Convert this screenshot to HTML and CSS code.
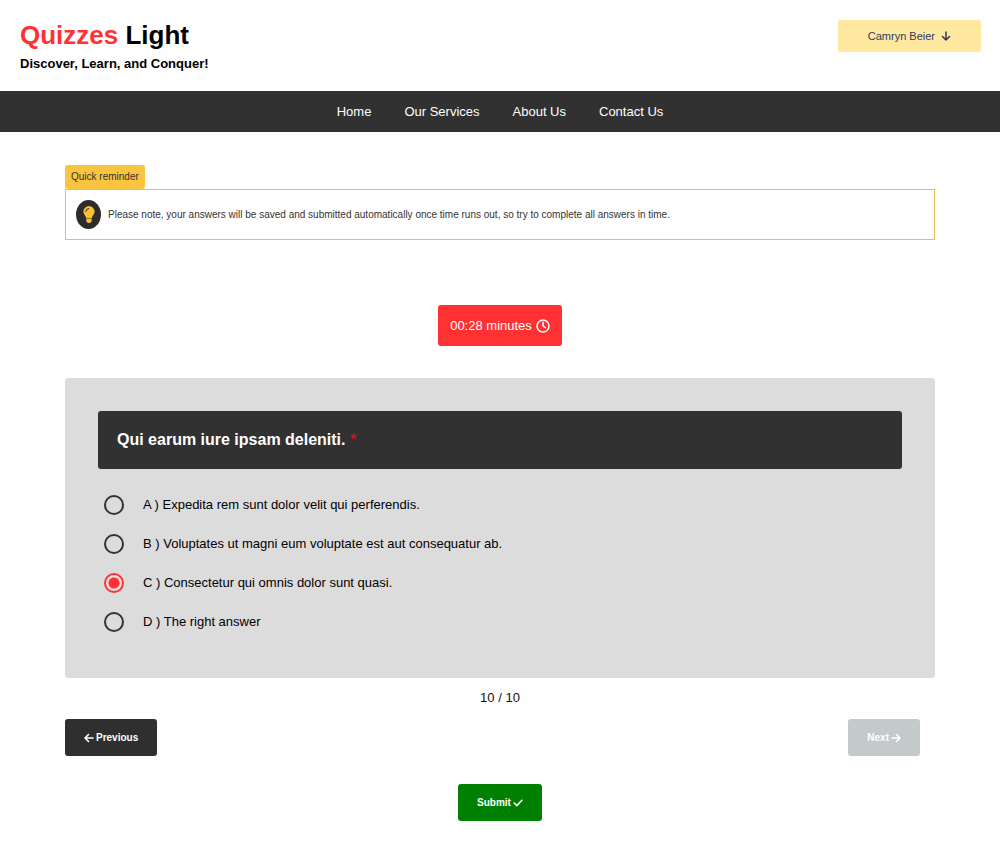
FILE: index.html
```html
<!DOCTYPE html>
<html lang="en">
<head>
<meta charset="utf-8">
<meta name="viewport" content="width=device-width, initial-scale=1">
<title>Quizzes Light</title>
<link rel="stylesheet" href="styles.css">
</head>
<body>
<header class="header">
  <div class="brand">
    <h1 class="brand-name"><span class="accent">Quizzes</span> Light</h1>
    <p class="tagline">Discover, Learn, and Conquer!</p>
  </div>
  <button class="user-menu" type="button">Camryn Beier
    <svg class="icon-down" viewBox="0 0 10 10" aria-hidden="true"><path d="M5 1v8M1.500 5.500 5 9l3.500-3.500"/></svg>
  </button>
</header>
<nav class="nav">
  <a href="#home">Home</a>
  <a href="#services">Our Services</a>
  <a href="#about">About Us</a>
  <a href="#contact">Contact Us</a>
</nav>
<main class="main">
  <section class="reminder">
    <h2 class="reminder-title">Quick reminder</h2>
    <div class="reminder-body">
      <span class="bulb">
        <svg viewBox="0 0 12 17" aria-hidden="true"><path class="bulb-fill" d="M6 0a5.600 5.600 0 0 0-5.600 5.600c0 2.400 1.500 3.500 2.300 5.200.2.400.3.800.3 1.200h6c0-.4.1-.8.300-1.200.8-1.700 2.300-2.800 2.300-5.200A5.600 5.600 0 0 0 6 0zM3.300 12.600h5.400v1.700A2.700 2.700 0 0 1 6 17a2.700 2.700 0 0 1-2.700-2.700z"/><path class="bulb-shine" d="M2.800 5.400A3 3 0 0 1 5.700 2.500"/></svg>
      </span>
      <p class="reminder-text">Please note, your answers will be saved and submitted automatically once time runs out, so try to complete all answers in time.</p>
    </div>
  </section>
  <div class="timer">
    <span>00:28 minutes</span>
    <svg class="icon-clock" viewBox="0 0 14 14" aria-hidden="true"><circle cx="7" cy="7" r="6"/><path d="M7 3.300V7l2.400 1.700"/></svg>
  </div>
  <form class="quiz">
    <fieldset class="card">
      <legend class="question">Qui earum iure ipsam deleniti. <span class="required">*</span></legend>
      <div class="options">
        <label class="option"><input class="radio" type="radio" name="answer" value="a"><span>A ) Expedita rem sunt dolor velit qui perferendis.</span></label>
        <label class="option"><input class="radio" type="radio" name="answer" value="b"><span>B ) Voluptates ut magni eum voluptate est aut consequatur ab.</span></label>
        <label class="option"><input class="radio" type="radio" name="answer" value="c" checked><span>C ) Consectetur qui omnis dolor sunt quasi.</span></label>
        <label class="option"><input class="radio" type="radio" name="answer" value="d"><span>D ) The right answer</span></label>
      </div>
    </fieldset>
    <p class="progress">10 / 10</p>
    <div class="pager">
      <button class="btn btn-dark" type="button"><svg class="icon" viewBox="0 0 10 10" aria-hidden="true"><path d="M9 5H1M4.500 1.500 1 5l3.500 3.500"/></svg>Previous</button>
      <button class="btn btn-muted" type="button" disabled>Next<svg class="icon" viewBox="0 0 10 10" aria-hidden="true"><path d="M1 5h8M5.500 1.500 9 5 5.500 8.500"/></svg></button>
    </div>
    <button class="btn btn-submit" type="submit">Submit<svg class="icon" viewBox="0 0 10 10" aria-hidden="true"><path d="M1.200 5 3.800 7.600 8.900 2.300"/></svg></button>
  </form>
</main>
</body>
</html>
```
FILE: styles.css
```css
* {
  box-sizing: border-box;
}

body {
  margin: 0;
  background: #fefefe;
  color: #111;
  font: 13px/16px "Liberation Sans", Arial, sans-serif;
}

h1, h2, p {
  margin: 0;
}

svg {
  fill: none;
  stroke: currentColor;
  stroke-linecap: round;
  stroke-linejoin: round;
}

.header {
  display: flex;
  justify-content: space-between;
  align-items: flex-start;
  padding: 20px 19px 19px 20px;
  color: #000;
}

.brand-name {
  font-size: 26px;
  line-height: 30px;
}

.accent {
  color: #ff3133;
}

.tagline {
  margin-top: 6px;
  font-weight: bold;
}

.user-menu {
  display: flex;
  align-items: center;
  gap: 6px;
  padding: 8px 30px;
  border: 0;
  border-radius: 2px;
  background: #ffe9a0;
  color: #35355f;
  font: 11px/16px "Liberation Sans", Arial, sans-serif;
}

.icon-down {
  width: 10px;
  height: 10px;
  stroke-width: 1.5;
}

.nav {
  display: flex;
  justify-content: center;
  gap: 33px;
  padding: 13px 20px 12px;
  background: #313132;
}

.nav a {
  color: #fff;
  text-decoration: none;
}

.main {
  padding: 33px 65px 32px;
}

.reminder-title {
  width: fit-content;
  padding: 4px 6px;
  border-radius: 3px;
  background: #f9c440;
  color: #333;
  font-size: 10px;
  font-weight: normal;
}

.reminder-body {
  display: flex;
  align-items: center;
  gap: 7px;
  padding: 10px;
  border: 1px solid #e8c24a;
  background: #fff;
}

.bulb {
  display: grid;
  flex: none;
  place-items: center;
  width: 25px;
  height: 29px;
  border-radius: 50%;
  background: #2c2c2c;
}

.bulb svg {
  width: 12px;
  height: 17px;
}

.bulb-fill {
  fill: #fbc02d;
  stroke: none;
}

.bulb-shine {
  stroke: #2c2c2c;
}

.reminder-text {
  color: #333;
  font-size: 10px;
}

.timer {
  display: flex;
  align-items: center;
  gap: 4px;
  width: fit-content;
  margin: 65px auto 32px;
  padding: 13px 12px 12px;
  border-radius: 3px;
  background: #ff3133;
  color: #fff;
}

.icon-clock {
  width: 14px;
  height: 14px;
  stroke-width: 1.5;
}

.quiz {
  display: flex;
  flex-direction: column;
}

.card {
  min-width: 0;
  margin: 0;
  padding: 33px;
  border: 0;
  border-radius: 3px;
  background: #dddcdd;
}

.question {
  float: left;
  width: 100%;
  padding: 19px;
  border-radius: 3px;
  background: #313132;
  color: #fff;
  font-size: 16px;
  font-weight: bold;
  line-height: 20px;
}

.required {
  color: #d51212;
}

.options {
  display: flex;
  flex-direction: column;
  gap: 19px;
  clear: both;
  padding: 26px 6px 13px;
}

.option {
  display: flex;
  align-items: center;
  gap: 19px;
  line-height: 20px;
  color: #000;
}

.radio {
  flex: none;
  appearance: none;
  width: 20px;
  height: 20px;
  margin: 0;
  border: 2px solid #333;
  border-radius: 50%;
}

.radio:checked {
  border-color: #ff3133;
  background: radial-gradient(circle, #ff3133 5px, #f6dcde 6px);
}

.progress {
  margin: 12px 0 13px;
  text-align: center;
}

.pager {
  display: flex;
  justify-content: space-between;
  padding-right: 15px;
}

.btn {
  display: flex;
  align-items: center;
  gap: 2px;
  padding: 11px 19px;
  border: 0;
  border-radius: 3px;
  color: #fff;
  font: bold 10px/15px "Liberation Sans", Arial, sans-serif;
}

.btn-dark {
  background: #2f2f30;
}

.btn-muted {
  background: #c4c9ca;
}

.btn-submit {
  align-self: center;
  margin-top: 28px;
  background: #008000;
}

.icon {
  width: 10px;
  height: 10px;
  stroke-width: 1.6;
}
```
